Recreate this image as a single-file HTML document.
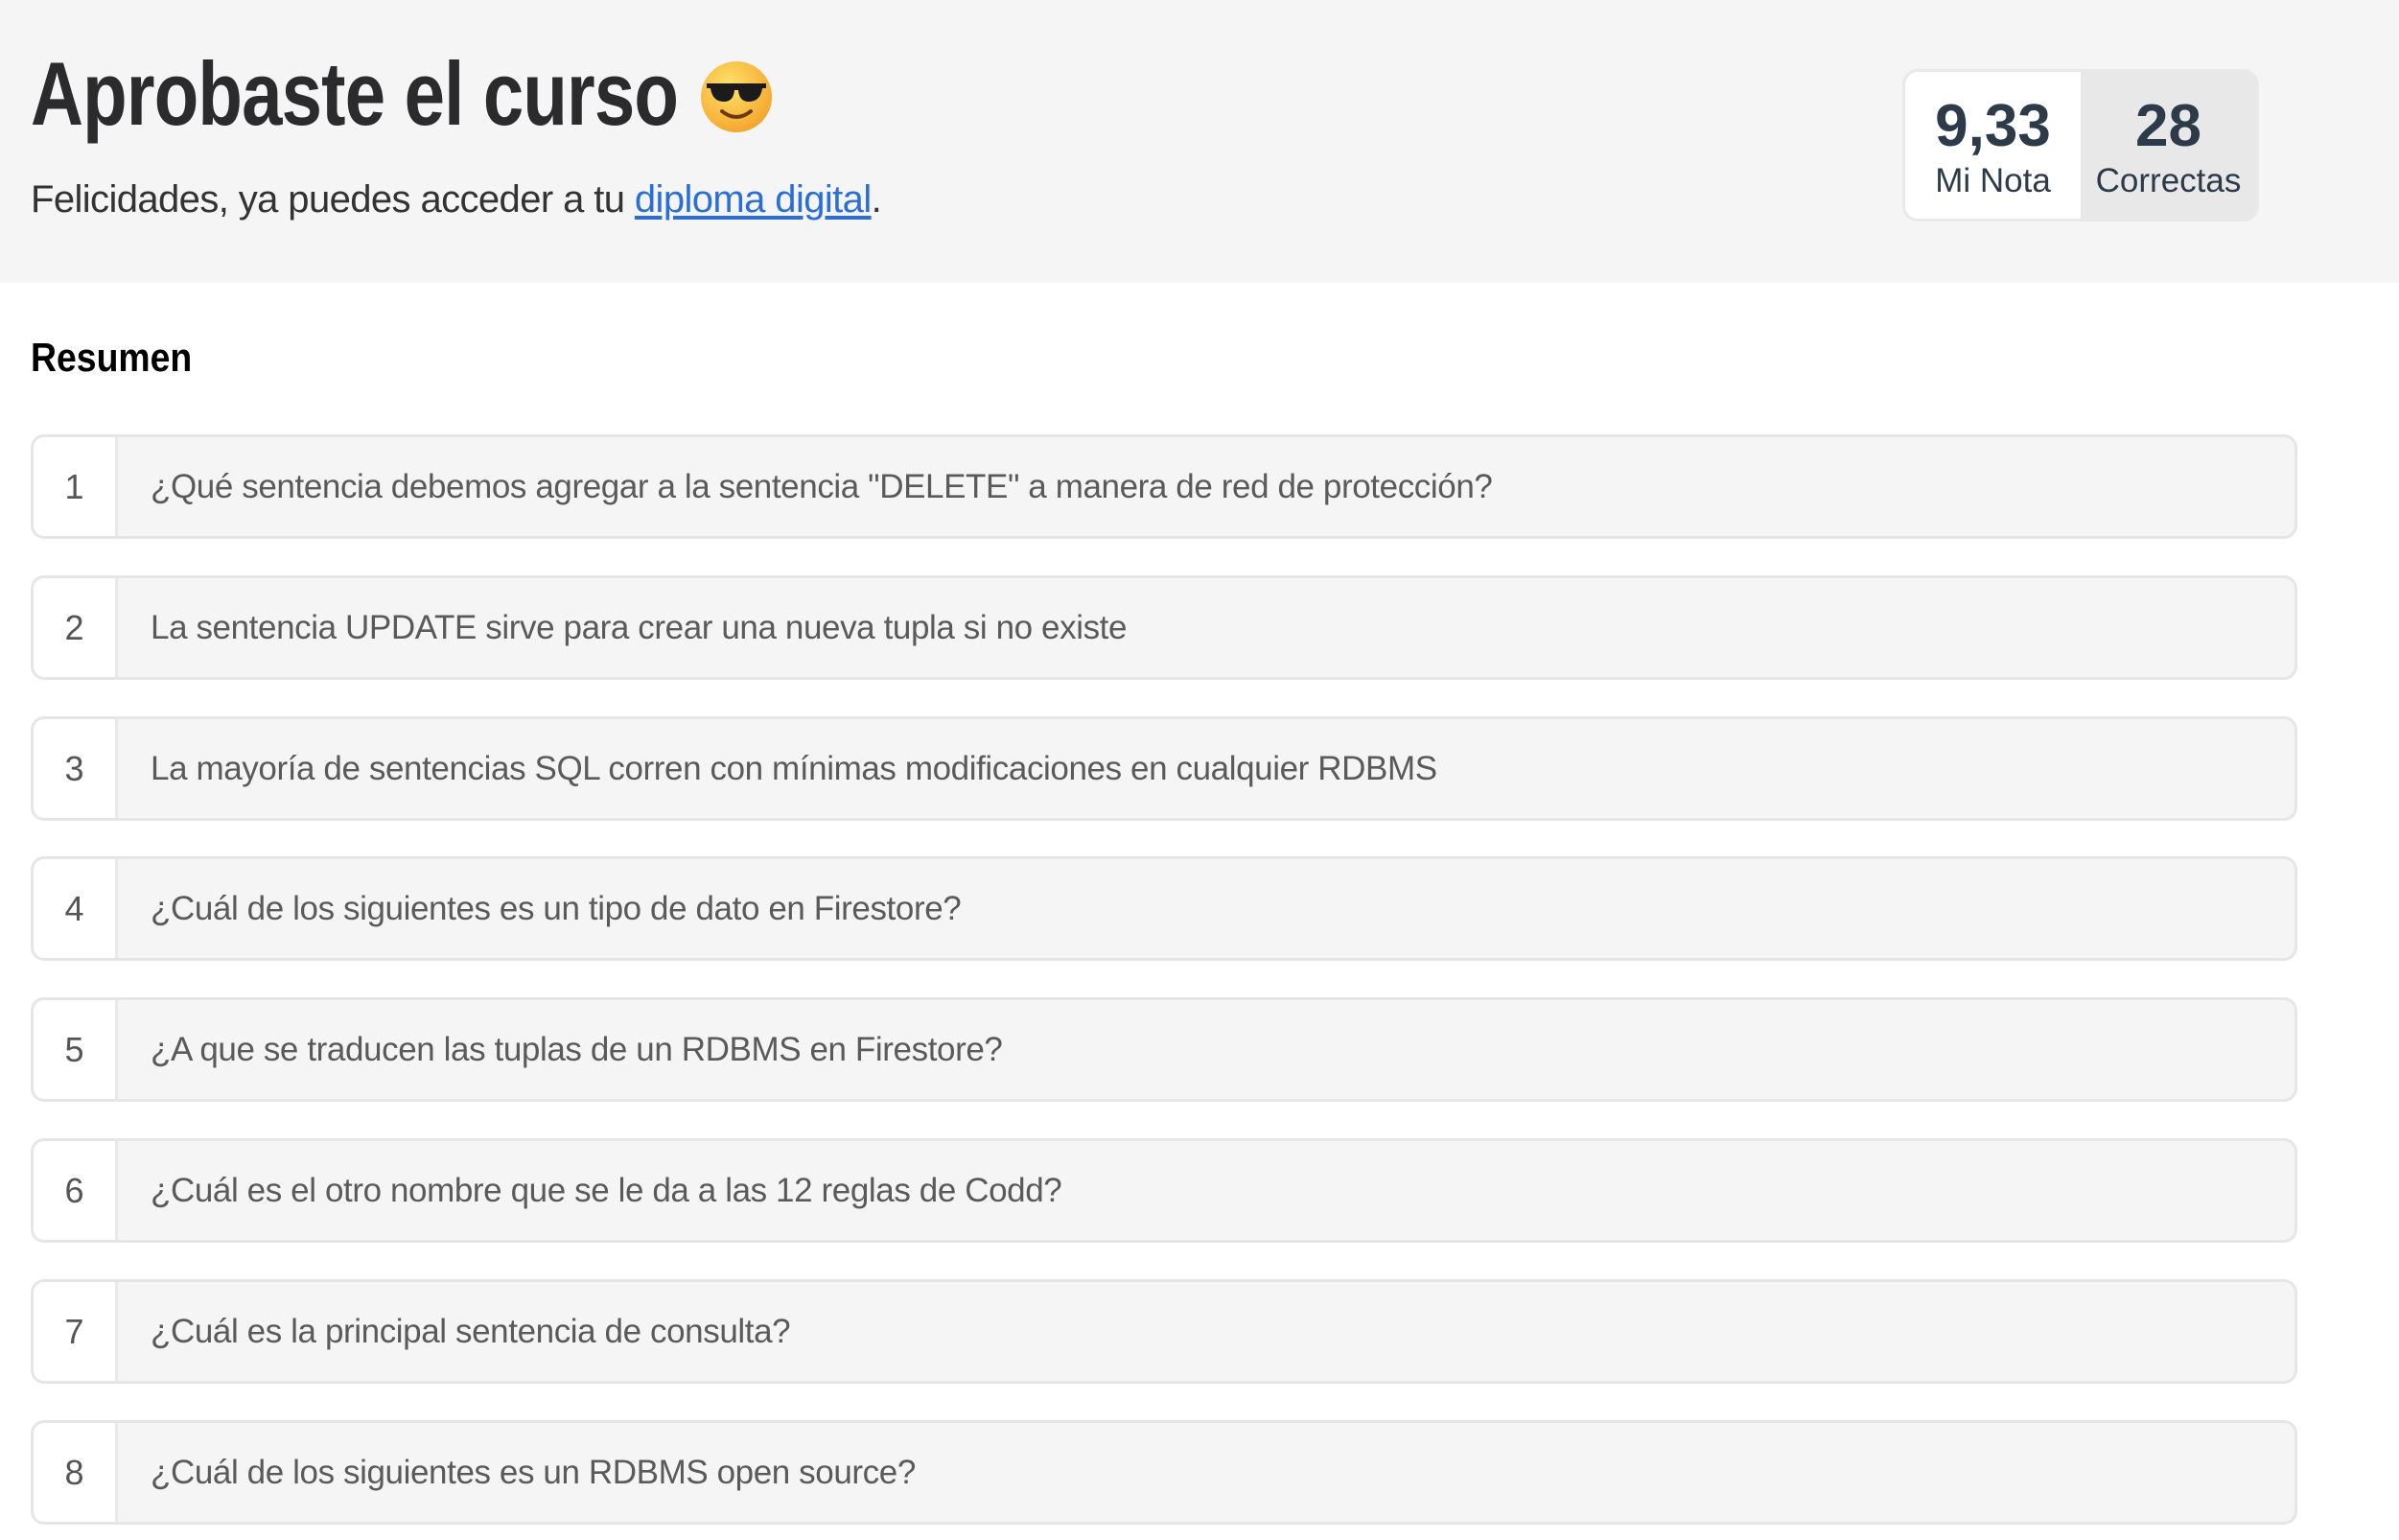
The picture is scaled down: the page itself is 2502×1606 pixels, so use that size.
<!DOCTYPE html>
<html><head><meta charset="utf-8"><style>
*{margin:0;padding:0;box-sizing:border-box}
body{width:2502px;height:1606px;background:#fff;font-family:"Liberation Sans",sans-serif;position:relative;overflow:hidden}
.hdr{position:absolute;left:0;top:0;width:2502px;height:295px;background:#f5f5f5}
.title{position:absolute;left:32px;top:44px;font-size:94px;font-weight:bold;color:#2b2b2d;white-space:nowrap;transform:scaleX(0.81);transform-origin:left top;letter-spacing:-1px}
.emoji{position:absolute;left:729px;top:62px;width:78px;height:78px}
.sub{position:absolute;left:32px;top:186px;font-size:40px;color:#333;white-space:nowrap;letter-spacing:-0.6px}
.sub a{color:#2a6ed8;text-decoration:underline;text-underline-offset:4px}
.stats{position:absolute;left:1984px;top:72px;width:372px;height:159px;border:3px solid #e9e9e9;border-radius:16px;overflow:hidden;display:flex;background:#e8e8e8}
.stats div{text-align:center;color:#2c3a49}
.s1{width:183px;background:#fff}
.s2{flex:1}
.n{font-size:62px;font-weight:bold;margin-top:24px;line-height:66px}
.l{font-size:35px;color:#333;line-height:40px;margin-top:4px}
.res{position:absolute;left:32px;top:349px;font-size:42px;font-weight:bold;color:#000;transform:scaleX(0.89);transform-origin:left top}
.row{position:absolute;left:32px;width:2364px;height:109px;border:3px solid #e6e6e6;border-radius:14px;background:#f5f5f5;overflow:hidden}
.num{position:absolute;left:0;top:0;width:88px;height:103px;background:#fff;border-right:3px solid #e9e9e9;text-align:center;line-height:103px;font-size:36px;color:#555}
.txt{position:absolute;left:122px;top:0;line-height:103px;font-size:35px;color:#5a5a5a;white-space:nowrap;letter-spacing:-0.4px}
</style></head><body>
<div class="hdr"></div>
<div class="title">Aprobaste el curso</div>
<svg class="emoji" viewBox="0 0 78 78"><defs><radialGradient id="g" cx="40%" cy="35%" r="70%"><stop offset="0" stop-color="#ffe36a"/><stop offset="1" stop-color="#f4a32a"/></radialGradient></defs><circle cx="39" cy="39" r="37" fill="url(#g)"/><path d="M8 25 H70 V30 H66 Q64 44 52 44 Q42 44 41 32 H37 Q36 44 26 44 Q14 44 12 30 H8Z" fill="#1b1b1b"/><path d="M24 54 Q39 66 54 54" stroke="#6b3a12" stroke-width="4" fill="none" stroke-linecap="round"/></svg>
<div class="sub">Felicidades, ya puedes acceder a tu <a>diploma digital</a>.</div>
<div class="stats"><div class="s1"><div class="n">9,33</div><div class="l">Mi Nota</div></div><div class="s2"><div class="n">28</div><div class="l">Correctas</div></div></div>
<div class="res">Resumen</div>
<div class="row" style="top:453px"><div class="num">1</div><div class="txt">¿Qué sentencia debemos agregar a la sentencia "DELETE" a manera de red de protección?</div></div>
<div class="row" style="top:600px"><div class="num">2</div><div class="txt">La sentencia UPDATE sirve para crear una nueva tupla si no existe</div></div>
<div class="row" style="top:747px"><div class="num">3</div><div class="txt">La mayoría de sentencias SQL corren con mínimas modificaciones en cualquier RDBMS</div></div>
<div class="row" style="top:893px"><div class="num">4</div><div class="txt">¿Cuál de los siguientes es un tipo de dato en Firestore?</div></div>
<div class="row" style="top:1040px"><div class="num">5</div><div class="txt">¿A que se traducen las tuplas de un RDBMS en Firestore?</div></div>
<div class="row" style="top:1187px"><div class="num">6</div><div class="txt">¿Cuál es el otro nombre que se le da a las 12 reglas de Codd?</div></div>
<div class="row" style="top:1334px"><div class="num">7</div><div class="txt">¿Cuál es la principal sentencia de consulta?</div></div>
<div class="row" style="top:1481px"><div class="num">8</div><div class="txt">¿Cuál de los siguientes es un RDBMS open source?</div></div>
</body></html>
